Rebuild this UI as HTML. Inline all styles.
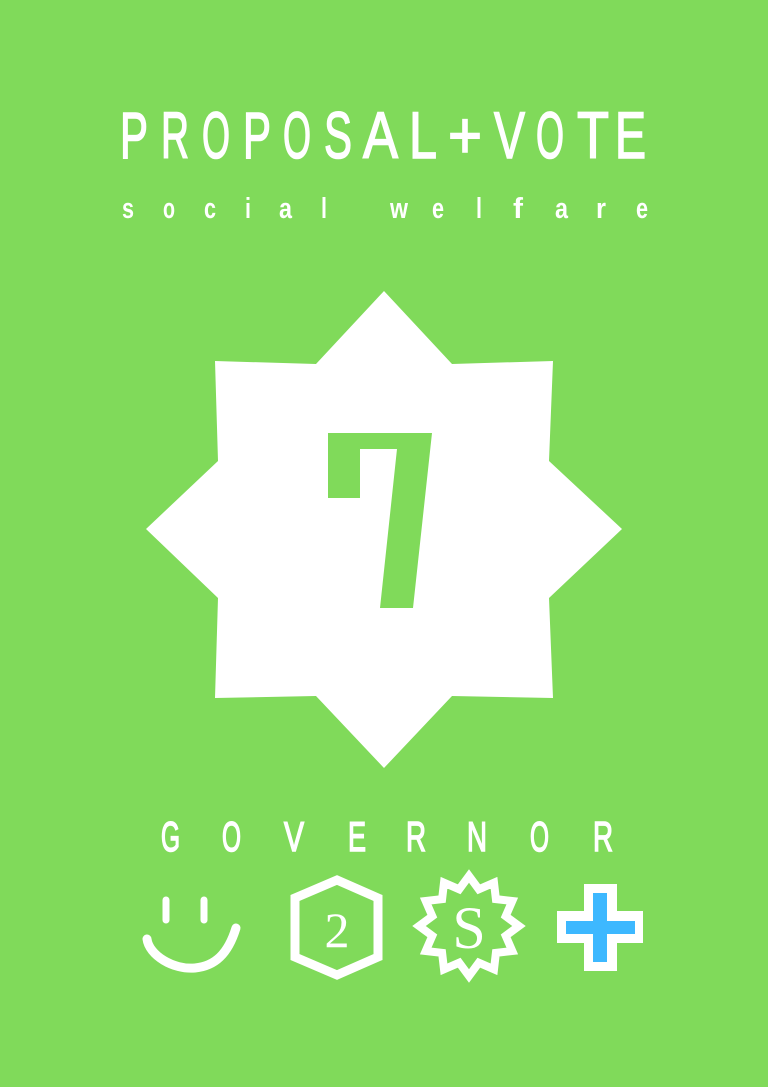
<!DOCTYPE html>
<html><head><meta charset="utf-8"><style>
html,body{margin:0;padding:0;background:#80da5a;}
svg{display:block}
text{font-family:"Liberation Sans Narrow","Liberation Sans",sans-serif;fill:#fff}
</style></head><body>
<svg width="768" height="1087" viewBox="0 0 768 1087" xmlns="http://www.w3.org/2000/svg">
<rect width="768" height="1087" fill="#80da5a"/>
<g font-size="66" stroke="#fff" stroke-width="1.6">
<text x="120" y="158" textLength="28" lengthAdjust="spacingAndGlyphs">P</text>
<text x="161" y="158" textLength="28" lengthAdjust="spacingAndGlyphs">R</text>
<text x="202" y="158" textLength="28" lengthAdjust="spacingAndGlyphs">O</text>
<text x="243" y="158" textLength="28" lengthAdjust="spacingAndGlyphs">P</text>
<text x="283" y="158" textLength="28" lengthAdjust="spacingAndGlyphs">O</text>
<text x="324" y="158" textLength="28" lengthAdjust="spacingAndGlyphs">S</text>
<text x="363" y="158" textLength="35" lengthAdjust="spacingAndGlyphs">A</text>
<text x="409" y="158" textLength="28" lengthAdjust="spacingAndGlyphs">L</text>
<text x="448" y="158" textLength="34" lengthAdjust="spacingAndGlyphs">+</text>
<text x="494" y="158" textLength="31" lengthAdjust="spacingAndGlyphs">V</text>
<text x="536" y="158" textLength="28" lengthAdjust="spacingAndGlyphs">O</text>
<text x="577" y="158" textLength="32" lengthAdjust="spacingAndGlyphs">T</text>
<text x="615" y="158" textLength="31" lengthAdjust="spacingAndGlyphs">E</text>
</g>
<g font-size="29" font-weight="bold">
<text x="122" y="218" textLength="12" lengthAdjust="spacingAndGlyphs">s</text>
<text x="163" y="218" textLength="12" lengthAdjust="spacingAndGlyphs">o</text>
<text x="204" y="218" textLength="12" lengthAdjust="spacingAndGlyphs">c</text>
<text x="245" y="218" textLength="6" lengthAdjust="spacingAndGlyphs">i</text>
<text x="279" y="218" textLength="13" lengthAdjust="spacingAndGlyphs">a</text>
<text x="321" y="218" textLength="6" lengthAdjust="spacingAndGlyphs">l</text>
<text x="390" y="218" textLength="18" lengthAdjust="spacingAndGlyphs">w</text>
<text x="432" y="218" textLength="12" lengthAdjust="spacingAndGlyphs">e</text>
<text x="476" y="218" textLength="6" lengthAdjust="spacingAndGlyphs">l</text>
<text x="513" y="218" textLength="10" lengthAdjust="spacingAndGlyphs">f</text>
<text x="555" y="218" textLength="13" lengthAdjust="spacingAndGlyphs">a</text>
<text x="596" y="218" textLength="10" lengthAdjust="spacingAndGlyphs">r</text>
<text x="636" y="218" textLength="12" lengthAdjust="spacingAndGlyphs">e</text>
</g>
<polygon fill="#fff" points="384,291 316,364 215,361 218,461 146,529 218,598 215,698 316,696 384,768 452,696 553,698 549,598 622,529 549,461 553,361 452,364"/>
<polygon fill="#80da5a" points="328,433 432,433 413,608 380,608 397,449 360,449 360,498 328,498"/>
<g font-size="42" stroke="#fff" stroke-width="1.6">
<text x="161" y="851" textLength="19" lengthAdjust="spacingAndGlyphs">G</text>
<text x="222" y="851" textLength="19" lengthAdjust="spacingAndGlyphs">O</text>
<text x="284" y="851" textLength="20" lengthAdjust="spacingAndGlyphs">V</text>
<text x="348" y="851" textLength="18" lengthAdjust="spacingAndGlyphs">E</text>
<text x="406" y="851" textLength="20" lengthAdjust="spacingAndGlyphs">R</text>
<text x="467" y="851" textLength="20" lengthAdjust="spacingAndGlyphs">N</text>
<text x="530" y="851" textLength="19" lengthAdjust="spacingAndGlyphs">O</text>
<text x="593" y="851" textLength="20" lengthAdjust="spacingAndGlyphs">R</text>
</g>
<g stroke="#fff" stroke-linecap="round" fill="none">
<line x1="166" y1="900" x2="166" y2="920" stroke-width="7"/>
<line x1="204" y1="900" x2="204" y2="920" stroke-width="7"/>
<path d="M147,939 C149,955 173,970 195,968 C215,966 228,954 236,928" stroke-width="9"/>
</g>
<polygon points="337,880 378,898 378,957 337,975 295,957 295,898" fill="none" stroke="#fff" stroke-width="9"/>
<text x="337" y="947" font-size="50" text-anchor="middle" style="font-family:'Liberation Serif',serif">2</text>
<polygon transform="translate(469,926)" fill="none" stroke="#fff" stroke-width="8" points="0,-50 9.8,-36.7 25,-43.3 26.9,-26.9 43.3,-25 36.7,-9.8 50,0 36.7,9.8 43.3,25 26.9,26.9 25,43.3 9.8,36.7 0,50 -9.8,36.7 -25,43.3 -26.9,26.9 -43.3,25 -36.7,9.8 -50,0 -36.7,-9.8 -43.3,-25 -26.9,-26.9 -25,-43.3 -9.8,-36.7"/>
<text x="469" y="948" font-size="60" text-anchor="middle" style="font-family:'Liberation Serif',serif">S</text>
<polygon fill="#fff" points="584,884 617,884 617,911 643,911 643,943 617,943 617,971 584,971 584,943 557,943 557,911 584,911"/>
<polygon fill="#3db8ff" points="593,893 607,893 607,921 635,921 635,934 607,934 607,962 593,962 593,934 566,934 566,921 593,921"/>
</svg>
</body></html>
